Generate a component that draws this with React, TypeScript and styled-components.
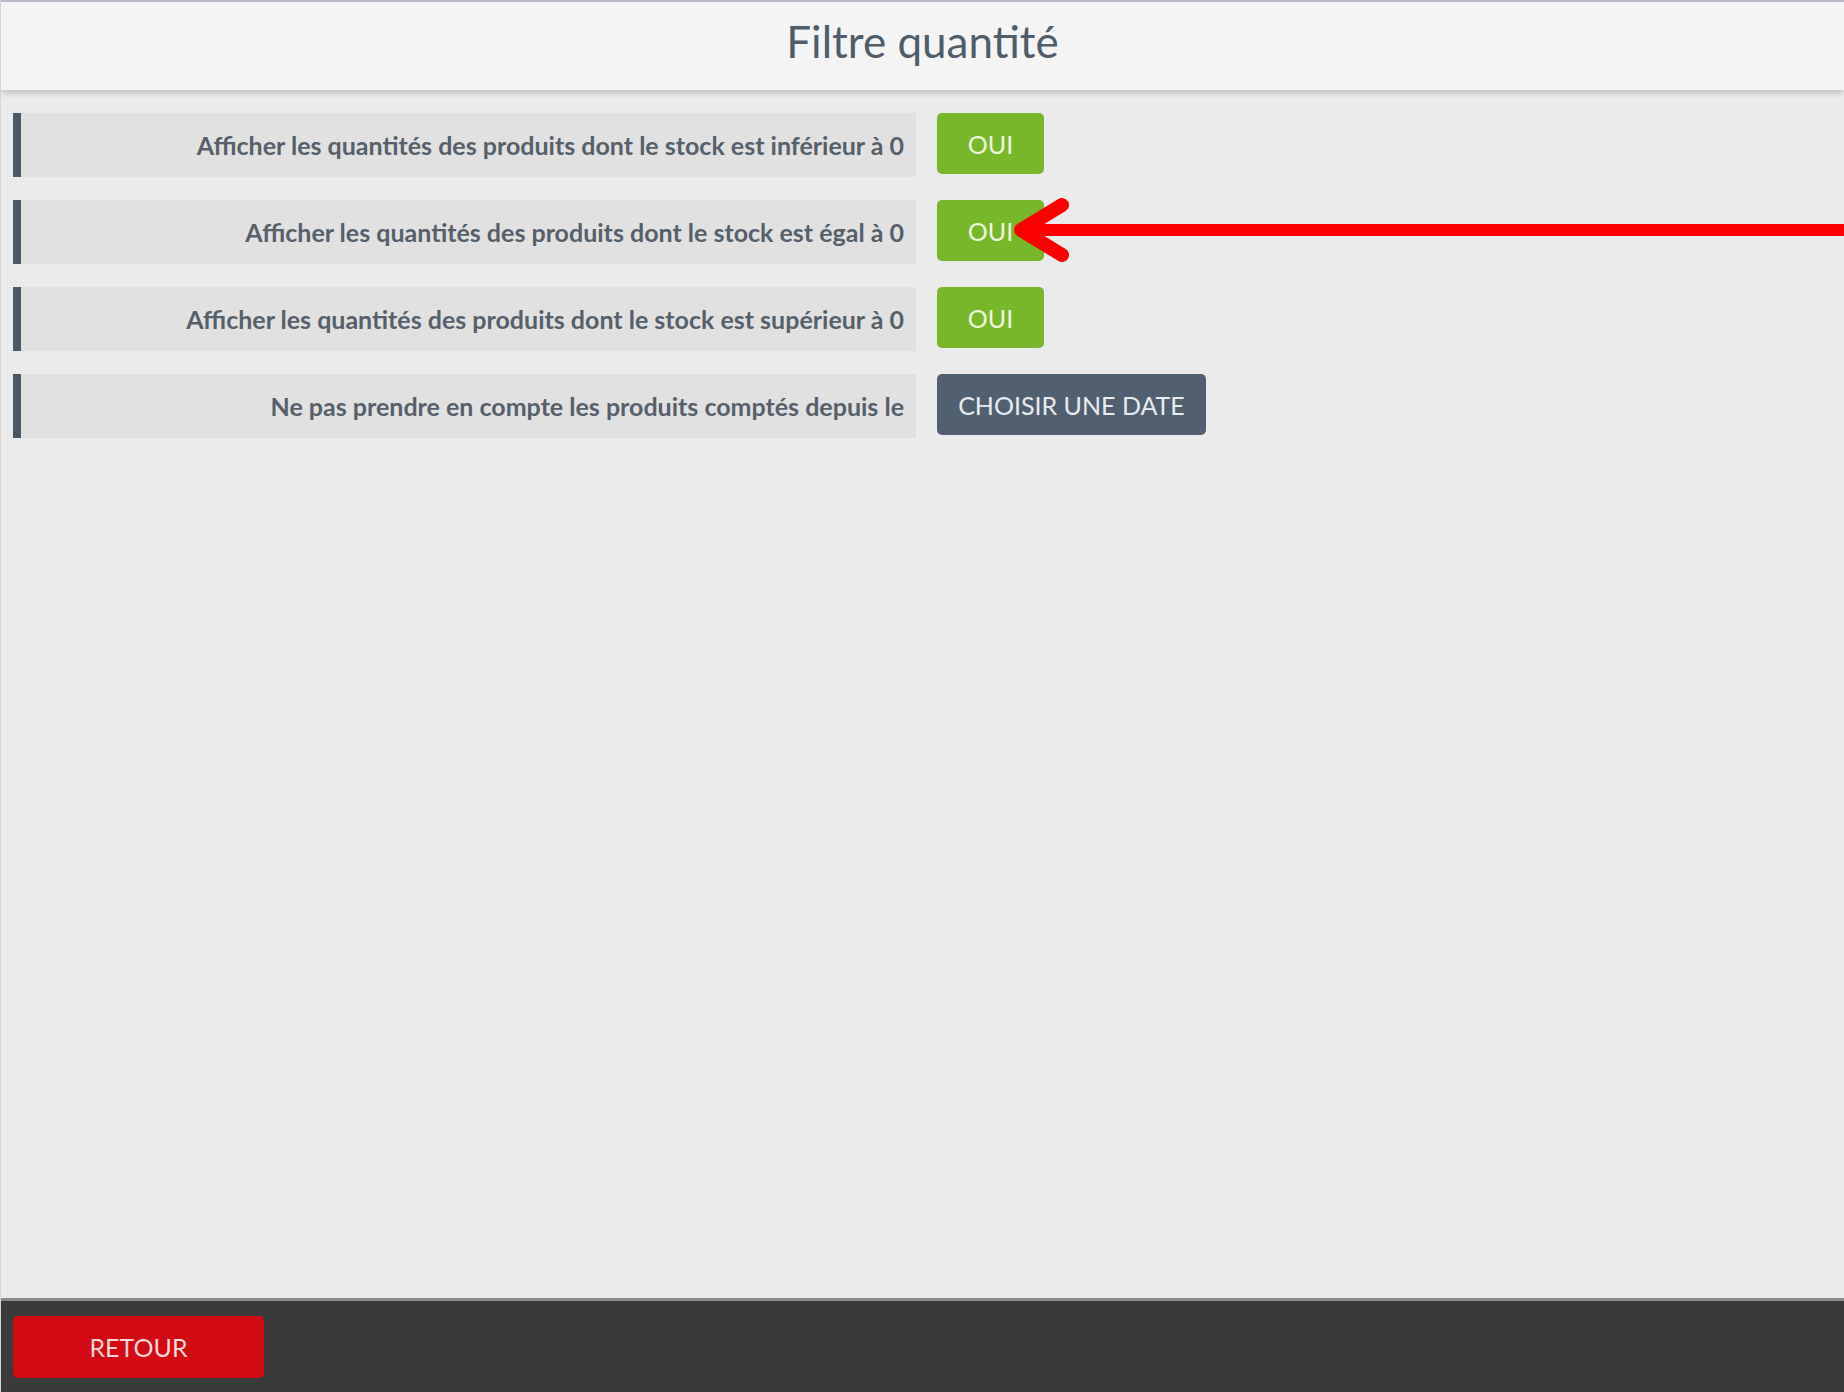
import styled, { createGlobalStyle } from "styled-components";

const GlobalStyle = createGlobalStyle`
  html, body {
    margin: 0;
    padding: 0;
    background: #ebebeb;
    font-family: Lato, "Open Sans", sans-serif;
  }
`;

const Page = styled.div`
  position: relative;
  display: flex;
  flex-direction: column;
  height: 100vh;
  background: #ebebeb;
  border-left: 1px solid #d4d4d4;
  box-sizing: border-box;
  overflow: hidden;
`;

const Header = styled.header`
  flex: 0 0 auto;
  height: 90px;
  box-sizing: border-box;
  padding-bottom: 10px;
  display: flex;
  align-items: center;
  justify-content: center;
  background: #f4f4f4;
  border-top: 2px solid #b9bcc7;
  box-shadow: 0 3px 6px rgba(0, 0, 0, 0.18);
  z-index: 1;
`;

const Title = styled.h1`
  margin: 0;
  font-size: 44px;
  font-weight: 400;
  color: #4f5c69;
  white-space: nowrap;
`;

const Content = styled.main`
  flex: 1;
  display: flex;
  flex-direction: column;
  gap: 23px;
  padding: 23px 0 0 12px;
`;

const Row = styled.div`
  display: flex;
  align-items: flex-start;
  gap: 21px;
`;

const Label = styled.div`
  width: 903px;
  height: 64px;
  box-sizing: border-box;
  display: flex;
  align-items: center;
  justify-content: flex-end;
  padding-right: 12px;
  background: #e1e1e1;
  border-left: 8px solid #4b5866;
  font-size: 25px;
  font-weight: 700;
  color: #55606b;
  white-space: nowrap;
`;

const ActionButton = styled.button<{ $variant: "yes" | "date" }>`
  height: 61px;
  width: ${({ $variant }) => ($variant === "yes" ? "107px" : "269px")};
  border: none;
  border-radius: 5px;
  padding: 0;
  font-family: Lato, sans-serif;
  font-size: 25px;
  font-weight: 400;
  background: ${({ $variant }) => ($variant === "yes" ? "#77b82a" : "#516071")};
  color: ${({ $variant }) => ($variant === "yes" ? "#eef6dc" : "#e8ebef")};
  cursor: pointer;
`;

const Footer = styled.footer`
  flex: 0 0 auto;
  height: 94px;
  box-sizing: border-box;
  display: flex;
  align-items: center;
  padding: 0 12px;
  background: #3a3a3a;
  border-top: 3px solid #8a8a8a;
`;

const BackButton = styled.button`
  width: 251px;
  height: 62px;
  border: none;
  border-radius: 5px;
  background: #d20b12;
  color: #f6d6d8;
  font-family: Lato, sans-serif;
  font-size: 25px;
  font-weight: 400;
  cursor: pointer;
`;

const Pointer = styled.svg`
  position: absolute;
  left: 1004px;
  top: 191px;
  pointer-events: none;
`;

const filters = [
  "Afficher les quantités des produits dont le stock est inférieur à 0",
  "Afficher les quantités des produits dont le stock est égal à 0",
  "Afficher les quantités des produits dont le stock est supérieur à 0",
];

export default function App() {
  return (
    <Page>
      <GlobalStyle />
      <Header>
        <Title>Filtre quantité</Title>
      </Header>

      <Content>
        {filters.map((text) => (
          <Row key={text}>
            <Label>{text}</Label>
            <ActionButton $variant="yes">OUI</ActionButton>
          </Row>
        ))}
        <Row>
          <Label>Ne pas prendre en compte les produits comptés depuis le</Label>
          <ActionButton $variant="date">CHOISIR UNE DATE</ActionButton>
        </Row>
      </Content>

      <Footer>
        <BackButton>RETOUR</BackButton>
      </Footer>

      {/* red annotation arrow pointing at the second toggle */}
      <Pointer width="840" height="80" viewBox="0 0 840 80">
        <line x1="22" y1="39" x2="840" y2="39" stroke="#ff0000" strokeWidth="12" />
        <polyline
          points="57,14 16,39 57,64"
          fill="none"
          stroke="#ff0000"
          strokeWidth="14"
          strokeLinecap="round"
          strokeLinejoin="round"
        />
      </Pointer>
    </Page>
  );
}
